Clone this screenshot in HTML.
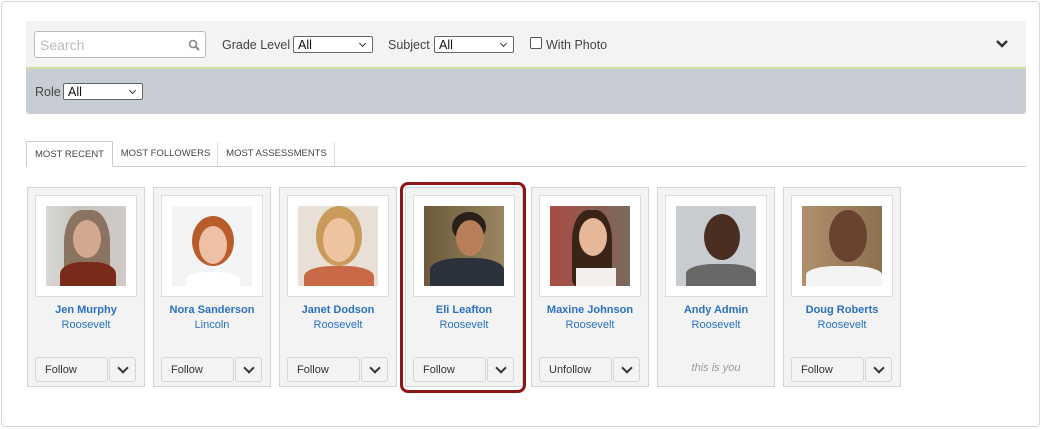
<!DOCTYPE html><html><head><style>
*{box-sizing:border-box;margin:0;padding:0}
body{width:1042px;height:429px;background:#fff;font-family:"Liberation Sans",sans-serif;position:relative;overflow:hidden}
.outer{position:absolute;left:1px;top:1px;width:1039px;height:426px;border:1px solid #d5d5d5;border-radius:4px}
.bar{position:absolute;left:26px;top:21px;width:1000px;height:47px;background:#f3f3f3}
.green{position:absolute;left:26px;top:67px;width:1000px;height:2px;background:#cfe0a0}
.band{position:absolute;left:26px;top:69px;width:1000px;height:45px;background:#c8cdd4;border-radius:0 0 3px 3px}
.lbl{position:absolute;font-size:12.5px;color:#444}
.sel{position:absolute;height:17px;border:1px solid #666;border-radius:2px;background:#fff;font-size:12.5px;color:#111;padding-left:4px;line-height:17px}
.sel:after{content:"";position:absolute;right:7px;top:4px;width:4px;height:4px;border-right:1px solid #333;border-bottom:1px solid #333;transform:rotate(45deg)}
.search{position:absolute;left:34px;top:31px;width:172px;height:27px;border:1px solid #bbb;border-radius:3px;background:#fff;font-size:14px;color:#bbb;padding:5px 5px;}
.tabs{position:absolute;left:26px;top:141px;width:1000px;height:26px;border-bottom:1px solid #ccc}
.tab{position:absolute;top:1px;height:25px;font-size:9.5px;color:#444;line-height:24px;text-align:center;border-right:1px solid #ddd}
.card{position:absolute;top:187px;width:118px;height:200px;background:#f3f3f3;border:1px solid #d0d5da}
.ph{position:absolute;left:7px;top:7px;width:102px;height:102px;background:#fff;border:1px solid #ddd}
.img{position:absolute;left:10px;top:10px;width:80px;height:80px;overflow:hidden}
.nm{position:absolute;top:116px;width:100%;text-align:center;font-size:11px;font-weight:bold;color:#2a72c0}
.sc{position:absolute;top:131px;width:100%;text-align:center;font-size:11px;color:#2a72c0}
.fb{position:absolute;left:7px;top:169px;width:73px;height:25px;border:1px solid #d5d5d5;border-radius:3px;background:#f3f3f3;font-size:11px;color:#333;padding-left:9px;line-height:25px}
.cb{position:absolute;left:81px;top:169px;width:27px;height:25px;border:1px solid #d5d5d5;border-radius:3px;background:#f3f3f3}
.cb:after{content:"";position:absolute;left:9px;top:6px;width:6px;height:6px;border-right:2px solid #333;border-bottom:2px solid #333;transform:rotate(45deg)}
.hl{position:absolute;left:400px;top:182px;width:126px;height:211px;border:3px solid #8e1515;border-radius:8px}
.face{position:absolute;border-radius:50%}
</style></head><body>
<div class="outer"></div>
<div class="bar"></div><div class="green"></div><div class="band"></div>
<div class="search">Search<svg style="position:absolute;right:5px;top:7px" width="12" height="12" viewBox="0 0 12 12"><circle cx="5" cy="5" r="3.5" fill="none" stroke="#888" stroke-width="1.6"/><path d="M7.5 7.5L11 11" stroke="#888" stroke-width="2"/></svg></div>
<div class="lbl" style="left:222px;top:38px">Grade Level</div><div class="sel" style="left:293px;top:36px;width:80px">All</div>
<div class="lbl" style="left:388px;top:38px">Subject</div><div class="sel" style="left:434px;top:36px;width:80px">All</div>
<div style="position:absolute;left:530px;top:37px;width:12px;height:12px;border:1px solid #555;border-radius:2px;background:#fff"></div>
<div class="lbl" style="left:546px;top:38px">With Photo</div>
<svg style="position:absolute;left:995px;top:39px" width="14" height="10" viewBox="0 0 14 10"><path d="M2 2L7 7L12 2" fill="none" stroke="#333" stroke-width="2.4"/></svg>
<div class="lbl" style="left:35px;top:85px">Role</div><div class="sel" style="left:63px;top:83px;width:80px">All</div>
<div class="tabs">
<div class="tab" style="left:0;width:87px;border:1px solid #ccc;border-bottom:1px solid #fff;height:26px;top:0;background:#fff;line-height:26px">MOST RECENT</div>
<div class="tab" style="left:88px;width:104px">MOST FOLLOWERS</div>
<div class="tab" style="left:193px;width:116px">MOST ASSESSMENTS</div>
</div>

<div class="card" style="left:27px"><div class="ph"><div class="img" style="background:linear-gradient(90deg,#d8d8d6,#c8c4be 40%,#cfcac6)"><div class="face" style="left:18px;top:4px;width:46px;height:80px;background:#8a7360;border-radius:40% 40% 10% 10%"></div><div class="face" style="left:27px;top:14px;width:28px;height:38px;background:#d4a88e"></div><div style="position:absolute;left:14px;top:56px;width:56px;height:30px;background:#7a2a18;border-radius:40% 40% 0 0"></div></div></div><div class="nm">Jen Murphy</div><div class="sc">Roosevelt</div><div class="fb">Follow</div><div class="cb"></div></div>
<div class="card" style="left:153px"><div class="ph"><div class="img" style="background:#f2f4f6"><div class="face" style="left:20px;top:10px;width:42px;height:50px;background:#b85c2c"></div><div class="face" style="left:27px;top:20px;width:28px;height:38px;background:#eec0a6"></div><div style="position:absolute;left:14px;top:66px;width:54px;height:20px;background:#fff;border-radius:40% 40% 0 0"></div></div></div><div class="nm">Nora Sanderson</div><div class="sc">Lincoln</div><div class="fb">Follow</div><div class="cb"></div></div>
<div class="card" style="left:279px"><div class="ph"><div class="img" style="background:#e8e0d6"><div class="face" style="left:18px;top:0px;width:46px;height:60px;background:#c89a5c"></div><div class="face" style="left:25px;top:12px;width:32px;height:44px;background:#eec3a0"></div><div style="position:absolute;left:6px;top:60px;width:70px;height:26px;background:#c86a48;border-radius:40% 40% 0 0"></div></div></div><div class="nm">Janet Dodson</div><div class="sc">Roosevelt</div><div class="fb">Follow</div><div class="cb"></div></div>
<div class="card" style="left:405px"><div class="ph"><div class="img" style="background:linear-gradient(90deg,#6b5a3c,#9a8660)"><div class="face" style="left:28px;top:6px;width:34px;height:30px;background:#2a201a"></div><div class="face" style="left:32px;top:14px;width:28px;height:36px;background:#b8805a"></div><div style="position:absolute;left:6px;top:52px;width:74px;height:30px;background:#2c323c;border-radius:40% 40% 0 0"></div></div></div><div class="nm">Eli Leafton</div><div class="sc">Roosevelt</div><div class="fb">Follow</div><div class="cb"></div></div>
<div class="card" style="left:531px"><div class="ph"><div class="img" style="background:linear-gradient(90deg,#a84c44,#7a6a5c)"><div class="face" style="left:22px;top:4px;width:40px;height:76px;background:#3a2418;border-radius:40% 40% 10% 10%"></div><div class="face" style="left:29px;top:12px;width:28px;height:38px;background:#e6b898"></div><div style="position:absolute;left:26px;top:62px;width:40px;height:20px;background:#f2efec"></div></div></div><div class="nm">Maxine Johnson</div><div class="sc">Roosevelt</div><div class="fb">Unfollow</div><div class="cb"></div></div>
<div class="card" style="left:657px"><div class="ph"><div class="img" style="background:#c8ccd0"><div class="face" style="left:28px;top:8px;width:36px;height:46px;background:#4a2e22"></div><div style="position:absolute;left:10px;top:58px;width:70px;height:24px;background:#6a6866;border-radius:40% 40% 0 0"></div></div></div><div class="nm">Andy Admin</div><div class="sc">Roosevelt</div><div style="position:absolute;top:174px;width:100%;text-align:center;font-size:11px;color:#999;font-style:italic">this is you</div></div>
<div class="card" style="left:783px"><div class="ph"><div class="img" style="background:linear-gradient(90deg,#b0906c,#8c7050)"><div class="face" style="left:27px;top:4px;width:38px;height:52px;background:#6a4230"></div><div style="position:absolute;left:4px;top:60px;width:76px;height:22px;background:#f4f4f4;border-radius:40% 40% 0 0"></div></div></div><div class="nm">Doug Roberts</div><div class="sc">Roosevelt</div><div class="fb">Follow</div><div class="cb"></div></div>
<div class="hl"></div>
</body></html>
